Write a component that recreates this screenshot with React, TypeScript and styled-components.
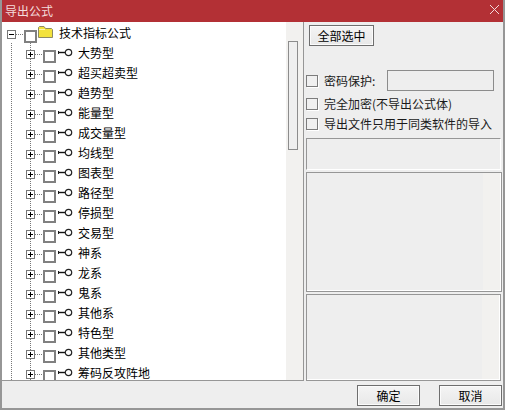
import styled, { createGlobalStyle } from "styled-components";

const GlobalStyle = createGlobalStyle`
  html, body {
    margin: 0;
    padding: 0;
    width: 505px;
    height: 410px;
    overflow: hidden;
    background: #eeeeee;
    font-family: "Noto Sans CJK SC", "Liberation Sans", sans-serif;
  }
`;

const groups = [
  "大势型",
  "超买超卖型",
  "趋势型",
  "能量型",
  "成交量型",
  "均线型",
  "图表型",
  "路径型",
  "停损型",
  "交易型",
  "神系",
  "龙系",
  "鬼系",
  "其他系",
  "特色型",
  "其他类型",
  "筹码反攻阵地",
];

function FolderIcon() {
  return (
    <FolderSvg width="15" height="12" viewBox="0 0 15 12">
      <path
        d="M0.5 11.5V1.5L1.5 0.5H6L7.5 2.5H13.5L14.5 3.5V11.5Z"
        fill="#f3e23c"
        stroke="#8d8a63"
      />
      <path d="M1 3.5H7" stroke="#fdf7b0" />
    </FolderSvg>
  );
}

function KeyIcon() {
  return (
    <KeySvg width="15" height="9" viewBox="0 0 15 9">
      <path d="M0.5 3V6" stroke="#222222" fill="none" />
      <path d="M0.5 4.5H7.5" stroke="#111111" strokeWidth="1.4" fill="none" />
      <circle cx="10.5" cy="4.5" r="3.2" fill="#ffffff" stroke="#222222" strokeWidth="1.2" />
    </KeySvg>
  );
}

function App() {
  return (
    <Window>
      <GlobalStyle />
      <TitleBar>
        <Title>导出公式</Title>
        <CloseIcon width="11" height="11" viewBox="0 0 11 11">
          <path d="M1 1L10 10M10 1L1 10" stroke="#f3d9da" fill="none" />
        </CloseIcon>
      </TitleBar>
      <Body>
        <TreePanel>
          <TreeArea>
            <RootRow>
              <Expander $open />
              <HorizontalDots />
              <RowCheck />
              <FolderIcon />
              <RootLabel>技术指标公式</RootLabel>
            </RootRow>
            <TreeRows>
              {groups.map((name) => (
                <TreeRow key={name}>
                  <Expander />
                  <HorizontalDots />
                  <RowCheck />
                  <KeyIcon />
                  <RowLabel>{name}</RowLabel>
                </TreeRow>
              ))}
            </TreeRows>
          </TreeArea>
          <ScrollTrack>
            <ScrollThumb />
          </ScrollTrack>
        </TreePanel>
        <SidePanel>
          <SelectAllButton>全部选中</SelectAllButton>
          <Options>
            <PasswordRow>
              <OptionCheck />
              <OptionLabel>密码保护:</OptionLabel>
              <PasswordInput />
            </PasswordRow>
            <OptionRow>
              <OptionCheck />
              <OptionLabel>完全加密(不导出公式体)</OptionLabel>
            </OptionRow>
            <OptionRow>
              <OptionCheck />
              <OptionLabel>导出文件只用于同类软件的导入</OptionLabel>
            </OptionRow>
          </Options>
          <MessageBox />
          <ListBox $height={120} $width={196} $stripWidth={18}>
            <BoxStrip />
          </ListBox>
          <ListBox $height={87} $width={195} $stripWidth={18}>
            <BoxStrip />
          </ListBox>
        </SidePanel>
      </Body>
      <Footer>
        <FooterButton>确定</FooterButton>
        <FooterButton>取消</FooterButton>
      </Footer>
    </Window>
  );
}

export default App;

const Window = styled.div`
  width: 505px;
  height: 410px;
  box-sizing: border-box;
  display: flex;
  flex-direction: column;
  background: #eeeeee;
  border-left: 2px solid #969696;
  border-right: 2px solid #969696;
  border-bottom: 2px solid #969696;
  overflow: hidden;
`;

const TitleBar = styled.div`
  height: 22px;
  flex: none;
  margin: 0 -2px;
  padding: 0 5px;
  display: flex;
  align-items: center;
  justify-content: space-between;
  background: #b33035;
`;

const Title = styled.span`
  color: #f4dcdd;
  font-size: 12px;
  line-height: 16px;
`;

const CloseIcon = styled.svg`
  display: block;
  margin-bottom: 3px;
`;

const Body = styled.div`
  height: 359px;
  flex: none;
  display: flex;
`;

const TreePanel = styled.div`
  width: 302px;
  flex: none;
  box-sizing: border-box;
  display: flex;
  background: #ffffff;
  border-right: 1px solid #969696;
  border-bottom: 1px solid #969696;
  overflow: hidden;
`;

const TreeArea = styled.div`
  flex: 1;
  min-width: 0;
  padding-top: 1px;
  overflow: hidden;
`;

const RootRow = styled.div`
  height: 20px;
  padding-left: 5px;
  display: flex;
  align-items: center;
`;

const dottedLine = `repeating-linear-gradient(
  to bottom,
  #777777 0,
  #777777 1px,
  transparent 1px,
  transparent 2px
)`;

const TreeRows = styled.div`
  padding-left: 24px;
  background-image: ${dottedLine}, ${dottedLine};
  background-size: 1px 100%, 1px 100%;
  background-position: 9px 0, 28px 0;
  background-repeat: no-repeat;
`;

const TreeRow = styled.div`
  height: 20px;
  display: flex;
  align-items: center;
`;

const Expander = styled.span<{ $open?: boolean }>`
  position: relative;
  width: 9px;
  height: 9px;
  margin-top: 3px;
  flex: none;
  box-sizing: border-box;
  border: 1px solid #777777;
  background: #ffffff;

  &::before {
    content: "";
    position: absolute;
    left: 1px;
    top: 3px;
    width: 5px;
    height: 1px;
    background: #000000;
  }

  &::after {
    content: "";
    display: ${(p) => (p.$open ? "none" : "block")};
    position: absolute;
    left: 3px;
    top: 1px;
    width: 1px;
    height: 5px;
    background: #000000;
  }
`;

const HorizontalDots = styled.span`
  width: 8px;
  height: 1px;
  margin-top: 2px;
  flex: none;
  background: repeating-linear-gradient(
    to right,
    #777777 0,
    #777777 1px,
    transparent 1px,
    transparent 2px
  );
`;

const RowCheck = styled.span`
  width: 13px;
  height: 13px;
  margin-top: 6px;
  flex: none;
  box-sizing: border-box;
  border: 2px solid #808080;
  background: #ffffff;
`;

const FolderSvg = styled.svg`
  display: block;
  margin: 0 0 2px 1px;
  flex: none;
`;

const KeySvg = styled.svg`
  display: block;
  margin: 0 0 1px 2px;
  flex: none;
`;

const RootLabel = styled.span`
  margin-left: 6px;
  font-size: 12px;
  line-height: 14px;
  color: #000000;
  white-space: nowrap;
`;

const RowLabel = styled(RootLabel)`
  margin-left: 5px;
`;

const ScrollTrack = styled.div`
  width: 17px;
  flex: none;
  padding: 19px 0 0 2px;
  box-sizing: border-box;
  background: #f2f1ef;
`;

const ScrollThumb = styled.div`
  width: 10px;
  height: 109px;
  box-sizing: border-box;
  border: 1px solid #8c8c8c;
  background: #efefef;
`;

const SidePanel = styled.div`
  flex: 1;
  min-width: 0;
  padding: 3px 0 0 2px;
  display: flex;
  flex-direction: column;
`;

const RaisedButton = styled.button`
  padding: 0;
  box-sizing: border-box;
  border: 1px solid #6e6e6e;
  background: linear-gradient(#f4f4f4, #e8e8e8);
  box-shadow: inset 0 0 0 1px #fbfbfb;
  color: #000000;
  font-family: inherit;
  font-size: 12px;
  line-height: 16px;
`;

const SelectAllButton = styled(RaisedButton)`
  width: 65px;
  height: 21px;
  margin-left: 3px;
  flex: none;
`;

const Options = styled.div`
  margin: 24px 0 4px;
  display: flex;
  flex-direction: column;
`;

const OptionRow = styled.div`
  height: 20px;
  display: flex;
  align-items: center;
`;

const PasswordRow = styled(OptionRow)`
  height: 21px;
  margin-bottom: 3px;
`;

const OptionCheck = styled.span`
  width: 12px;
  height: 12px;
  flex: none;
  box-sizing: border-box;
  border: 1px solid #7c7c7c;
  background: #f0f0f0;
  box-shadow: 1px 1px 0 #ffffff;
`;

const OptionLabel = styled.span`
  margin-left: 6px;
  font-size: 12px;
  line-height: 16px;
  color: #1a1a1a;
  white-space: nowrap;
`;

const PasswordInput = styled.div`
  width: 107px;
  height: 21px;
  margin-left: 12px;
  box-sizing: border-box;
  border: 1px solid #8c8c8c;
  background: #eeeeee;
`;

const MessageBox = styled.div`
  width: 195px;
  height: 32px;
  flex: none;
  margin-bottom: 2px;
  box-sizing: border-box;
  border: 1px solid #969696;
  border-right-color: #ffffff;
  border-bottom-color: #ffffff;
  background: #eeeeee;
`;

const ListBox = styled.div<{ $height: number; $width: number; $stripWidth: number }>`
  height: ${(p) => p.$height}px;
  width: ${(p) => p.$width}px;
  flex: none;
  margin-bottom: 2px;
  padding-left: ${(p) => p.$width - p.$stripWidth - 2}px;
  box-sizing: border-box;
  display: flex;
  border: 1px solid #969696;
  background: #eeeeee;
  box-shadow: inset -1px -1px 0 #ffffff;

  &:last-child {
    margin-bottom: 0;
  }
`;

const BoxStrip = styled.div`
  flex: 1;
  margin: 0 1px 1px 0;
  background: #f2f1ef;
`;

const Footer = styled.div`
  flex: 1;
  padding: 4px 1px 0 0;
  display: flex;
  justify-content: flex-end;
  gap: 19px;
`;

const FooterButton = styled(RaisedButton)`
  width: 63px;
  height: 21px;
`;
